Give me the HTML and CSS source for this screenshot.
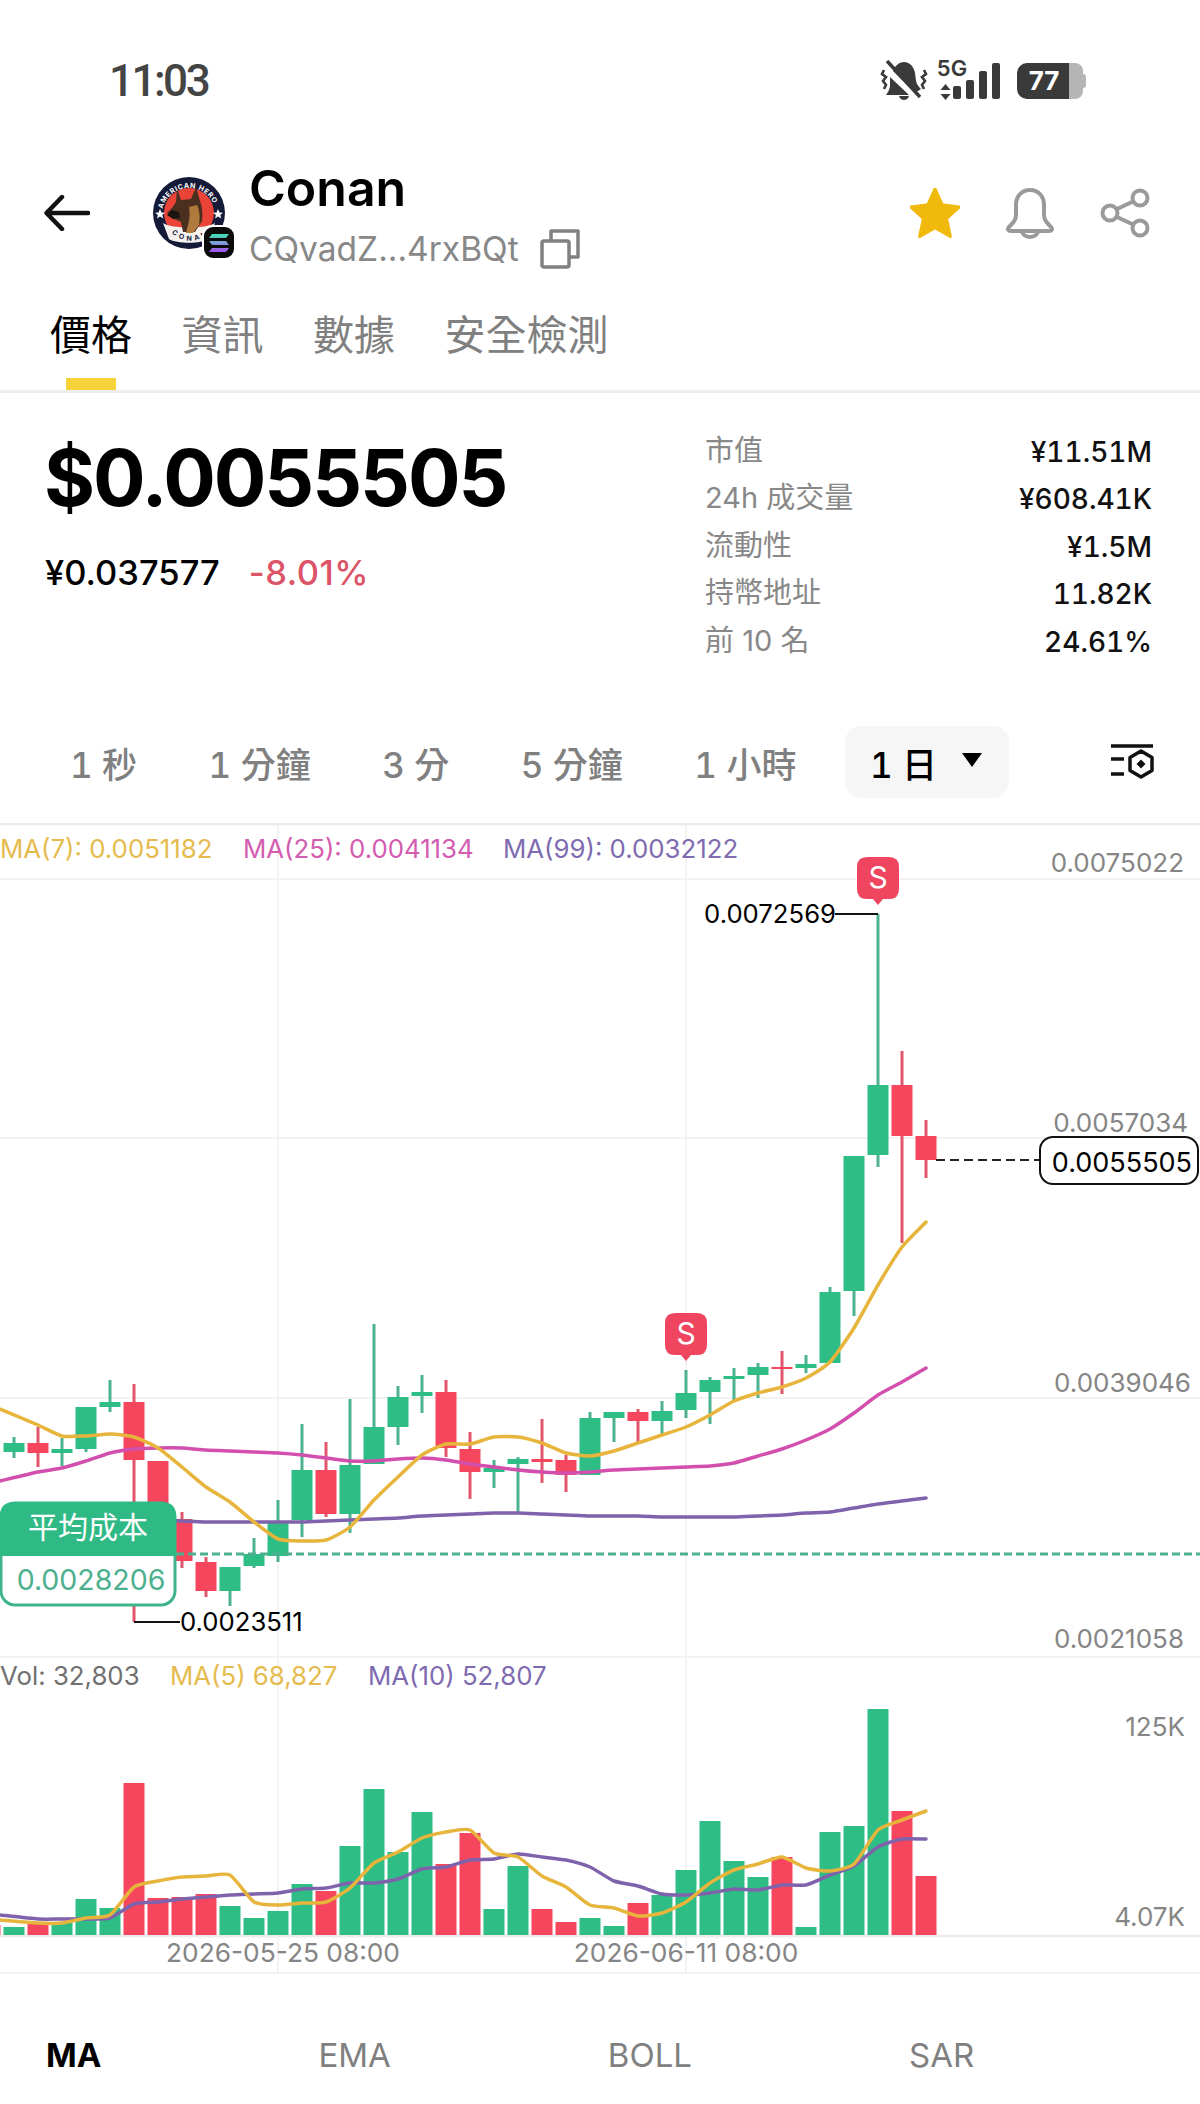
FILE: index.html
```html
<!DOCTYPE html>
<html lang="zh-Hant">
<head>
    <meta charset="UTF-8">
    <meta name="viewport" content="width=device-width, initial-scale=1.0">
    <title>Conan</title>
    <link rel="stylesheet" href="styles.css">
</head>
<body>
    <div class="status-bar">
        <span class="clock">11:03</span>
        <div class="status-icons">
            <svg class="mute-icon" width="48" height="42" viewBox="0 0 48 42">
                <path class="fill-dark" d="M24 3c6 0 10 5 11 11l1 8c1 4 3 6 5 8l-6 4-22-22c2-5 6-9 11-9zM10 18l19 18H6c2-3 4-6 4-10zM19 37h10c-1 3-3 4-5 4s-4-1-5-4z"/>
                <path class="line-dark" d="M7 2l33 36" stroke-width="3.4"/>
                <path class="line-dark thin" d="M4 11l-2 4 4 3-3 4 3 4-2 4M44 11l2 4-4 3 3 4-3 4 2 4" stroke-width="2.6"/>
            </svg>
            <div class="network">
                <span class="net-label">5G</span>
                <svg width="11" height="16" viewBox="0 0 11 16"><path class="fill-dark" d="M5.500 0l5 6H.5zM5.500 16l-5-6h10z"/></svg>
            </div>
            <div class="signal">
                <i class="bar-1"></i><i class="bar-2"></i><i class="bar-3"></i><i class="bar-4"></i>
            </div>
            <div class="battery"><span class="battery-level">77</span></div>
        </div>
    </div>

    <header class="token-header">
        <svg class="back-icon" width="46" height="36" viewBox="0 0 46 36">
            <path d="M44 18H3M18 2L2.500 18 18 34"/>
        </svg>
        <div class="token-logo">
            <svg width="72" height="72" viewBox="0 0 72 72">
                <circle cx="36" cy="36" r="36" fill="#141a38"/>
                <circle cx="36" cy="36" r="25" fill="#ea4439"/>
                <path d="M10 46c8 6 44 6 52 0l-6 16c-8 5-32 5-40 0z" fill="#f4f1ee"/>
                <path d="M24 11l4 12 10-1 5-12 4 14c2 5 3 12 2 20l-7 11H30l-2-10-9-4-5-5 5-5 4-6z" fill="#4b3020"/>
                <path d="M36 30l8-2c3 6 3 14 2 20l-6 8h-7c2-8 5-16 3-26z" fill="#b07a3c"/>
                <path d="M14 38l5-5 7 2 1 6-7 1z" fill="#1c1410"/>
                <path d="M7 41l1.500 3.500 3.500.3-2.700 2.200 1 3.500-3.300-2-3 2 .9-3.500L2 44.800l3.500-.3zM65 41l1.500 3.500 3.500.3-2.700 2.200 1 3.500-3.300-2-3 2 .9-3.500-2.900-2.200 3.500-.3z" fill="#ffffff" transform="translate(0 -9)"/>
                <defs>
                    <path id="logo-arc-top" d="M9 38a27 27 0 0 1 54 0"/>
                    <path id="logo-arc-bottom" d="M13 48a27 27 0 0 0 46 5"/>
                </defs>
                <text class="logo-text"><textPath href="#logo-arc-top" startOffset="6">AMERICAN HERO</textPath></text>
                <text class="logo-text logo-text-dark"><textPath href="#logo-arc-bottom" startOffset="10">CONAN</textPath></text>
            </svg>
            <span class="chain-badge">
                <svg width="22" height="20" viewBox="0 0 22 20">
                    <defs>
                        <linearGradient id="sol-grad" x1="0" y1="0" x2="0" y2="1">
                            <stop offset="0" stop-color="#3fe0b4"/>
                            <stop offset="0.5" stop-color="#7e9bd8"/>
                            <stop offset="1" stop-color="#a44df0"/>
                        </linearGradient>
                    </defs>
                    <path fill="url(#sol-grad)" d="M4 1h17l-3 4H1zM1 8h17l3 4H4zM4 15h17l-3 4H1z"/>
                </svg>
            </span>
        </div>
        <div class="token-title">
            <h1 class="token-name">Conan</h1>
            <div class="token-address">
                <span>CQvadZ...4rxBQt</span>
                <svg class="copy-icon" width="40" height="40" viewBox="0 0 40 40">
                    <rect x="2" y="12" width="27" height="26" rx="2"/>
                    <path d="M11 11V2h27v26h-8"/>
                </svg>
            </div>
        </div>
        <div class="header-actions">
            <svg width="50" height="50" viewBox="2 2 46 46">
                <path class="star" d="M25 3l6.500 14.500L47 19.500 35.500 30 39 46.500 25 38.500 11 46.500 14.500 30 3 19.500l15.500-2z"/>
            </svg>
            <svg class="action-line" width="50" height="52" viewBox="0 0 50 52">
                <path d="M25 3c-9 0-14 7-14 15v10c0 5-3 8-7 12-2 2-1 4 2 4h38c3 0 4-2 2-4-4-4-7-7-7-12V18c0-8-5-15-14-15z"/>
                <path d="M17 44a8 6 0 0 0 16 0"/>
            </svg>
            <svg class="action-line" width="50" height="50" viewBox="0 0 50 50">
                <circle cx="40" cy="10" r="7.500"/>
                <circle cx="10" cy="25" r="7.500"/>
                <circle cx="40" cy="40" r="7.500"/>
                <path d="M17 21l16-7.500M17 29l16 7.500"/>
            </svg>
        </div>
    </header>

    <nav class="page-tabs">
        <a class="page-tab active">價格</a>
        <a class="page-tab">資訊</a>
        <a class="page-tab">數據</a>
        <a class="page-tab">安全檢測</a>
    </nav>

    <section class="summary">
        <div class="price-block">
            <div class="price">$0.0055505</div>
            <div class="price-sub">
                <span class="price-local">¥0.037577</span>
                <span class="price-change">-8.01%</span>
            </div>
        </div>
        <dl class="stats">
            <div class="stat-row"><dt>市值</dt><dd>¥11.51M</dd></div>
            <div class="stat-row"><dt>24h 成交量</dt><dd>¥608.41K</dd></div>
            <div class="stat-row"><dt>流動性</dt><dd>¥1.5M</dd></div>
            <div class="stat-row"><dt>持幣地址</dt><dd>11.82K</dd></div>
            <div class="stat-row"><dt>前 10 名</dt><dd>24.61%</dd></div>
        </dl>
    </section>

    <div class="intervals">
        <span class="interval">1 秒</span>
        <span class="interval">1 分鐘</span>
        <span class="interval">3 分</span>
        <span class="interval">5 分鐘</span>
        <span class="interval">1 小時</span>
        <span class="interval selected">1 日 <i class="caret"></i></span>
        <svg class="chart-settings" width="44" height="38" viewBox="0 0 44 38">
            <path d="M1 3h42M1 16h13M1 31h13"/>
            <path d="M31 8l11 6.500v13L31 34l-11-6.500v-13z"/>
            <path class="dot" d="M31 16.500l4.500 4.500-4.500 4.500-4.500-4.500z"/>
        </svg>
    </div>

    <!-- viewBox keeps the y values of the chart data in page pixels -->
    <svg id="chart" class="chart" width="1200" height="1152" viewBox="0 823 1200 1152">
        <g id="grid">
            <path class="grid-line heavy" d="M0 824H1200"/>
            <path class="grid-line" d="M0 879H1200M0 1138H1200M0 1398H1200M0 1657H1200M278 825V1973M686 825V1973"/>
            <path class="grid-line heavy" d="M0 1936H1200"/>
            <path class="grid-line" d="M0 1973H1200"/>
        </g>
        <g id="candles"></g>
        <g id="volumes"></g>
        <g id="lines"></g>

        <text class="legend ma7" x="0" y="858">MA(7): 0.0051182</text>
        <text class="legend ma25" x="243" y="858">MA(25): 0.0041134</text>
        <text class="legend ma99" x="503" y="858">MA(99): 0.0032122</text>

        <text class="axis" x="1184" y="872" text-anchor="end">0.0075022</text>
        <text class="axis" x="1188" y="1132" text-anchor="end">0.0057034</text>
        <text class="axis" x="1191" y="1392" text-anchor="end">0.0039046</text>
        <text class="axis" x="1184" y="1648" text-anchor="end">0.0021058</text>
        <text class="axis" x="1185" y="1736" text-anchor="end">125K</text>
        <text class="axis" x="1185" y="1926" text-anchor="end">4.07K</text>

        <text class="legend vol" x="0" y="1685">Vol: 32,803</text>
        <text class="legend ma7" x="170" y="1685">MA(5) 68,827</text>
        <text class="legend ma99" x="368" y="1685">MA(10) 52,807</text>

        <text class="axis date" x="283" y="1962" text-anchor="middle">2026-05-25 08:00</text>
        <text class="axis date" x="686" y="1962" text-anchor="middle">2026-06-11 08:00</text>

        <!-- high and low callouts -->
        <path class="callout" d="M835 914H878M134 1622H180"/>
        <text class="peak" x="836" y="923" text-anchor="end">0.0072569</text>
        <text class="peak" x="180" y="1631">0.0023511</text>

        <!-- sell markers -->
        <g transform="translate(857 857)">
            <path class="marker" d="M10 0h22q10 0 10 10v22q0 10-10 10h-6l-5 6-5-6h-6q-10 0-10-10V10q0-10 10-10z"/>
            <text class="marker-text" x="21" y="31" text-anchor="middle">S</text>
        </g>
        <g transform="translate(665 1313)">
            <path class="marker" d="M10 0h22q10 0 10 10v22q0 10-10 10h-6l-5 6-5-6h-6q-10 0-10-10V10q0-10 10-10z"/>
            <text class="marker-text" x="21" y="31" text-anchor="middle">S</text>
        </g>

        <!-- last price tag -->
        <path class="last-dash" d="M936 1160H1039"/>
        <rect class="last-box" x="1040" y="1137" width="158" height="47" rx="13"/>
        <text class="peak last-value" x="1192" y="1172" text-anchor="end">0.0055505</text>

        <!-- average cost -->
        <path class="cost-dash" d="M176 1554H1200"/>
        <rect class="cost-box" x="1" y="1503" width="174" height="102" rx="14"/>
        <path class="cost-head" d="M0 1556V1516q0-14 14-14H162q14 0 14 14V1556z"/>
        <text class="cost-title" x="88" y="1538" text-anchor="middle">平均成本</text>
        <text class="cost-value" x="91" y="1590" text-anchor="middle">0.0028206</text>
    </svg>

    <nav class="indicator-tabs">
        <a class="indicator active">MA</a>
        <a class="indicator">EMA</a>
        <a class="indicator">BOLL</a>
        <a class="indicator">SAR</a>
    </nav>

    <script src="chart.js"></script>
</body>
</html>
```

FILE: styles.css
```css
* {
    box-sizing: border-box;
}

body {
    margin: 0;
    width: 1200px;
    height: 2104px;
    overflow: hidden;
    background: #ffffff;
    color: #000000;
    font-family: Inter, "Noto Sans CJK TC", sans-serif;
}

/* status bar */
.status-bar {
    height: 150px;
    padding: 59px 115px 0 109px;
    display: flex;
    justify-content: space-between;
    align-items: flex-start;
}

.clock {
    font-family: Roboto, sans-serif;
    font-size: 44px;
    font-weight: 500;
    line-height: 44px;
    letter-spacing: -2.500px;
    color: #444444;
}

.status-icons {
    display: flex;
    align-items: flex-start;
}

.fill-dark {
    fill: #3a3a3a;
}

.line-dark {
    fill: none;
    stroke: #3a3a3a;
}

.mute-icon {
    margin-right: 10px;
}

.network {
    width: 28px;
    display: flex;
    flex-direction: column;
    align-items: center;
    margin-right: -13px;
}

.network svg {
    align-self: flex-start;
    margin: 7px 0 0 2px;
}

.net-label {
    font-size: 22px;
    font-weight: 600;
    line-height: 18px;
    color: #3a3a3a;
}

.signal {
    display: flex;
    align-items: flex-end;
    gap: 5px;
    height: 36px;
    margin: 4px 17px 0 0;
}

.signal i {
    width: 8px;
    border-radius: 2px;
    background: #3a3a3a;
}

.bar-1 { height: 13px; }
.bar-2 { height: 19px; }
.bar-3 { height: 28px; }
.bar-4 { height: 36px; }

.battery {
    position: relative;
    width: 66px;
    height: 36px;
    margin: 4px 2px 0 0;
    border-radius: 10px 8px 8px 10px;
    background: linear-gradient(90deg, #3a3a3a 52px, #b5b5b5 52px);
    display: flex;
    justify-content: center;
    padding-right: 12px;
}

.battery::after {
    content: "";
    position: absolute;
    right: -3px;
    top: 11px;
    width: 3px;
    height: 14px;
    border-radius: 0 3px 3px 0;
    background: #b5b5b5;
}

.battery-level {
    font-size: 26px;
    font-weight: 700;
    line-height: 36px;
    color: #ffffff;
}

/* token header */
.token-header {
    height: 126px;
    padding: 0 50px 0 44px;
    display: flex;
    align-items: center;
}

.back-icon path {
    fill: none;
    stroke: #111111;
    stroke-width: 4.500;
    stroke-linecap: round;
    stroke-linejoin: round;
}

.token-logo {
    position: relative;
    width: 72px;
    height: 72px;
    margin-left: 63px;
}

.logo-text {
    font-size: 7px;
    font-weight: 700;
    letter-spacing: 0.6px;
    fill: #ffffff;
}

.logo-text-dark {
    fill: #141a38;
    letter-spacing: 3px;
}

.chain-badge {
    position: absolute;
    left: 49px;
    top: 48px;
    width: 34px;
    height: 35px;
    border: 2px solid #ffffff;
    border-radius: 11px;
    background: #0b0b0b;
    display: flex;
    align-items: center;
    justify-content: center;
}

.token-title {
    margin: 4px 0 0 24px;
    display: flex;
    flex-direction: column;
}

.token-name {
    margin: 0;
    font-size: 50px;
    font-weight: 600;
    line-height: 54px;
}

.token-address {
    display: flex;
    align-items: center;
    gap: 21px;
    margin-top: 14px;
    font-size: 33.500px;
    line-height: 40px;
    color: #888888;
}

.copy-icon rect,
.copy-icon path {
    fill: none;
    stroke: #808080;
    stroke-width: 3.500;
    stroke-linejoin: round;
}

.header-actions {
    margin-left: auto;
    display: flex;
    align-items: center;
    gap: 45px;
}

.star {
    fill: #f0b90b;
    stroke: #f0b90b;
    stroke-width: 3;
    stroke-linejoin: round;
}

.action-line path,
.action-line circle {
    fill: none;
    stroke: #9a9a9a;
    stroke-width: 4;
    stroke-linecap: round;
    stroke-linejoin: round;
}

/* page tabs */
.page-tabs {
    height: 117px;
    padding: 37px 0 0 50px;
    display: flex;
    gap: 49.500px;
    border-bottom: 3px solid #eeeeee;
}

.page-tab {
    position: relative;
    font-size: 41px;
    line-height: 44px;
    color: #808080;
}

.page-tab.active {
    color: #000000;
}

.page-tab.active::after {
    content: "";
    position: absolute;
    left: 16px;
    right: 16px;
    top: 65px;
    height: 12px;
    background: #f7d33b;
}

/* price summary */
.summary {
    height: 333px;
    display: flex;
    justify-content: space-between;
    padding: 33px 48px 0 44px;
}

.price {
    margin-top: 14px;
    font-size: 78px;
    font-weight: 700;
    line-height: 76px;
    letter-spacing: -2px;
}

.price-sub {
    margin: 37px 0 0 1px;
    display: flex;
    gap: 29px;
    font-size: 34.500px;
    line-height: 40px;
}

.price-local {
    font-weight: 500;
}

.price-change {
    font-weight: 500;
    color: #dc5468;
    letter-spacing: 0.5px;
}

.stats {
    width: 447px;
    margin: 0;
}

.stat-row {
    height: 47.500px;
    display: flex;
    justify-content: space-between;
    align-items: center;
}

.stat-row dt {
    margin-bottom: 4px;
    font-size: 29px;
    color: #888888;
}

.stat-row dd {
    margin: 4px 0 0;
    font-size: 28px;
    font-weight: 500;
    font-feature-settings: "tnum";
    color: #111111;
}

/* intervals */
.intervals {
    height: 72px;
    padding: 0 46px 0 70px;
    display: flex;
    align-items: center;
    gap: 71.500px;
}

.interval {
    font-size: 35px;
    font-weight: 500;
    font-feature-settings: "tnum";
    color: #808080;
}

.interval.selected {
    display: flex;
    align-items: center;
    gap: 12px;
    width: 164px;
    height: 72px;
    margin-left: -23px;
    padding-left: 25px;
    border-radius: 16px;
    background: #f6f6f6;
    color: #000000;
}

.caret {
    width: 0;
    height: 0;
    margin-left: 13px;
    margin-top: -4px;
    border-left: 10px solid transparent;
    border-right: 10px solid transparent;
    border-top: 14px solid #000000;
}

.chart-settings {
    margin-left: auto;
}

.chart-settings path {
    fill: none;
    stroke: #111111;
    stroke-width: 3.500;
    stroke-linejoin: round;
}

.chart-settings .dot {
    fill: #111111;
    stroke: none;
}

/* chart */
.chart {
    display: block;
    margin-top: 25px;
}

.grid-line {
    fill: none;
    stroke: #f0f0f0;
    stroke-width: 1.500;
}

.grid-line.heavy {
    stroke: #ececec;
    stroke-width: 3;
}

.up {
    fill: #2ebd85;
}

.down {
    fill: #f6465d;
}

.wick-up {
    fill: #4cb28f;
}

.wick-down {
    fill: #e2566c;
}

.ma-line {
    fill: none;
    stroke-width: 3.500;
    stroke-linejoin: round;
    stroke-linecap: round;
}

.ma-yellow { stroke: #e7b43c; }
.ma-pink { stroke: #d24fae; }
.ma-purple { stroke: #7f62ac; }

.legend {
    font-size: 25.800px;
}

.ma7 { fill: #e5bb4e; }
.ma25 { fill: #d35cb0; }
.ma99 { fill: #7e6bb0; }
.vol { fill: #707070; }

.axis {
    font-size: 26px;
    fill: #858585;
}

.axis.date {
    font-size: 26.300px;
}

.callout {
    fill: none;
    stroke: #111111;
    stroke-width: 2;
}

.peak {
    font-size: 25.700px;
    fill: #000000;
}

.last-value {
    font-size: 27px;
}

.marker {
    fill: #f0455f;
}

.marker-text {
    font-size: 30px;
    fill: #ffffff;
}

.last-dash {
    stroke: #222222;
    stroke-width: 2;
    stroke-dasharray: 9 5;
}

.last-box {
    fill: #ffffff;
    stroke: #111111;
    stroke-width: 2;
}

.cost-dash {
    stroke: #4db08f;
    stroke-width: 3;
    stroke-dasharray: 8 4;
}

.cost-box {
    fill: #ffffff;
    stroke: #3fb58a;
    stroke-width: 3;
}

.cost-head {
    fill: #2fb985;
}

.cost-title {
    font-size: 30px;
    fill: #ffffff;
}

.cost-value {
    font-size: 28.500px;
    fill: #4db08f;
}

/* indicator tabs */
.indicator-tabs {
    height: 129px;
    padding: 60px 0 0 46px;
    display: flex;
    gap: 217px;
}

.indicator {
    font-size: 33px;
    line-height: 40px;
    color: #808080;
}

.indicator.active {
    font-weight: 700;
    color: #000000;
}
```

FILE: chart.js
```js
// one candle every 24px, starting at x = 14
const STEP = 24;
const FIRST_X = 14;
const BODY_W = 21;
const NS = 'http://www.w3.org/2000/svg';

// [up?, wick top, wick bottom, body top, body bottom]
const candles = [
    [1, 1437, 1458, 1443, 1452], [0, 1427, 1467, 1443, 1453], [1, 1438, 1466, 1449, 1453],
    [1, 1407, 1452, 1407, 1449], [1, 1380, 1412, 1402, 1407], [0, 1384, 1622, 1402, 1460],
    [0, 1461, 1510, 1461, 1510], [0, 1512, 1568, 1519, 1561], [0, 1557, 1597, 1562, 1591],
    [1, 1567, 1606, 1567, 1591], [1, 1538, 1568, 1554, 1566], [1, 1500, 1562, 1523, 1556],
    [1, 1424, 1537, 1470, 1520], [0, 1442, 1517, 1470, 1514], [1, 1399, 1533, 1465, 1514],
    [1, 1324, 1464, 1427, 1464], [1, 1386, 1445, 1397, 1427], [1, 1375, 1413, 1392, 1396],
    [0, 1380, 1457, 1392, 1448], [0, 1432, 1499, 1449, 1472], [1, 1460, 1488, 1468, 1472],
    [1, 1457, 1513, 1459, 1464], [0, 1419, 1483, 1459, 1462], [0, 1455, 1492, 1460, 1475],
    [1, 1412, 1475, 1418, 1475], [1, 1412, 1442, 1412, 1418], [0, 1409, 1443, 1412, 1421],
    [1, 1401, 1435, 1411, 1421], [1, 1370, 1418, 1393, 1410], [1, 1377, 1424, 1380, 1392],
    [1, 1368, 1401, 1376, 1379], [1, 1363, 1398, 1367, 1375], [0, 1351, 1394, 1367, 1369],
    [1, 1355, 1373, 1364, 1368], [1, 1287, 1363, 1292, 1363], [1, 1156, 1316, 1156, 1291],
    [1, 914, 1167, 1085, 1155], [0, 1051, 1243, 1085, 1136], [0, 1120, 1178, 1136, 1160]
];

// [up?, bar top], bars stand on y = 1935
const volumes = [
    [1, 1927], [0, 1924], [1, 1923], [1, 1899], [1, 1908], [0, 1783], [0, 1898], [0, 1897],
    [0, 1894], [1, 1906], [1, 1918], [1, 1911], [1, 1884], [0, 1891], [1, 1846], [1, 1789],
    [1, 1852], [1, 1812], [0, 1864], [0, 1833], [1, 1909], [1, 1866], [0, 1909], [0, 1922],
    [1, 1918], [1, 1926], [0, 1903], [1, 1895], [1, 1870], [1, 1821], [1, 1861], [1, 1877],
    [0, 1857], [1, 1927], [1, 1832], [1, 1826], [1, 1709], [0, 1811], [0, 1876]
];

const ma7 = [1425, 1436, 1436, 1434, 1437, 1448, 1467, 1487, 1502, 1522, 1539, 1541, 1540, 1527, 1500,
    1477, 1455, 1444, 1444, 1437, 1437, 1443, 1453, 1456, 1451, 1443, 1435, 1427, 1415, 1401, 1393,
    1387, 1378, 1362, 1328, 1285, 1247, 1222];
const ma25 = [1472, 1468, 1461, 1453, 1449, 1448, 1448, 1450, 1451, 1452, 1453, 1455, 1458, 1461, 1461,
    1459, 1458, 1460, 1464, 1467, 1470, 1472, 1473, 1472, 1470, 1469, 1468, 1467, 1466, 1463, 1456,
    1449, 1440, 1429, 1413, 1395, 1382, 1368];
const ma99 = [1526, 1525, 1524, 1523, 1522, 1521, 1521, 1522, 1522, 1522, 1522, 1522, 1521, 1520, 1519,
    1518, 1516, 1515, 1514, 1513, 1513, 1514, 1515, 1516, 1516, 1516, 1517, 1517, 1517, 1517, 1516,
    1515, 1513, 1512, 1508, 1504, 1501, 1498];
const vol5 = [1923, 1923, 1918, 1915, 1887, 1881, 1877, 1876, 1875, 1902, 1905, 1903, 1902, 1888, 1863,
    1852, 1838, 1832, 1830, 1853, 1857, 1876, 1887, 1905, 1908, 1916, 1913, 1902, 1883, 1870, 1864,
    1857, 1868, 1871, 1864, 1830, 1820, 1811];
const vol10 = [1919, 1919, 1919, 1918, 1904, 1902, 1899, 1897, 1895, 1894, 1893, 1889, 1888, 1883, 1883,
    1879, 1869, 1867, 1860, 1859, 1854, 1857, 1860, 1867, 1881, 1886, 1894, 1895, 1893, 1889, 1890,
    1885, 1885, 1875, 1866, 1847, 1839, 1839];

function el(tag, attrs, parent) {
    const node = document.createElementNS(NS, tag);
    for (const key in attrs) {
        node.setAttribute(key, attrs[key]);
    }
    parent.appendChild(node);
    return node;
}

// slightly rounded joins, the reference lines are only lightly smoothed
function smoothPath(pts) {
    const t = 10;
    let d = 'M' + pts[0][0] + ' ' + pts[0][1];
    for (let i = 0; i < pts.length - 1; i++) {
        const p0 = pts[i - 1] || pts[i];
        const p1 = pts[i];
        const p2 = pts[i + 1];
        const p3 = pts[i + 2] || p2;
        const c1x = p1[0] + (p2[0] - p0[0]) / t;
        const c1y = p1[1] + (p2[1] - p0[1]) / t;
        const c2x = p2[0] - (p3[0] - p1[0]) / t;
        const c2y = p2[1] - (p3[1] - p1[1]) / t;
        d += 'C' + c1x + ' ' + c1y + ' ' + c2x + ' ' + c2y + ' ' + p2[0] + ' ' + p2[1];
    }
    return d;
}

function addLine(parent, points, start, cls) {
    // lines enter from the left edge of the chart
    const coords = [[0, start]].concat(points.map((y, i) => [FIRST_X + STEP * (i + 1), y]));
    el('path', { d: smoothPath(coords), class: 'ma-line ' + cls }, parent);
}

const candleGroup = document.getElementById('candles');
const volumeGroup = document.getElementById('volumes');
const lineGroup = document.getElementById('lines');

candles.forEach((c, i) => {
    const x = FIRST_X + STEP * i;
    const up = c[0] === 1;
    el('rect', { x: x - 1.5, y: c[1], width: 3, height: c[2] - c[1], class: up ? 'wick-up' : 'wick-down' }, candleGroup);
    el('rect', { x: x - BODY_W / 2, y: c[3], width: BODY_W, height: c[4] - c[3], class: up ? 'up' : 'down' }, candleGroup);
});

volumes.forEach((v, i) => {
    const x = FIRST_X + STEP * i;
    el('rect', { x: x - BODY_W / 2, y: v[1], width: BODY_W, height: 1935 - v[1], class: v[0] === 1 ? 'up' : 'down' }, volumeGroup);
});
el('rect', { x: -10, y: 1925, width: 10.5, height: 10, class: 'down' }, volumeGroup);

addLine(lineGroup, ma99, 1530, 'ma-purple');
addLine(lineGroup, ma25, 1481, 'ma-pink');
addLine(lineGroup, ma7, 1409, 'ma-yellow');
addLine(lineGroup, vol10, 1915, 'ma-purple');
addLine(lineGroup, vol5, 1920, 'ma-yellow');
```
